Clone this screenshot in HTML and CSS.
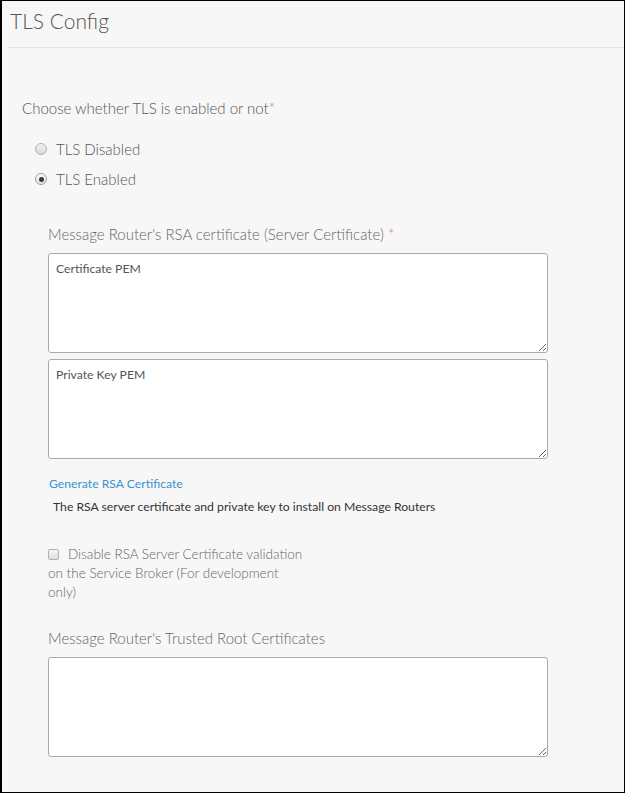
FILE: index.html
```html
<!DOCTYPE html>
<html>
<head>
<meta charset="utf-8">
<link rel="stylesheet" href="styles.css">
</head>
<body>
<div class="page">
  <div class="header">
    <h1 class="title">TLS Config</h1>
  </div>
  <div class="content">
    <div class="question">Choose whether TLS is enabled or not<span class="req">*</span></div>
    <div class="radios">
      <label class="radio"><span class="radio-dot"></span>TLS Disabled</label>
      <label class="radio"><span class="radio-dot checked"></span>TLS Enabled</label>
    </div>
    <div class="section">
      <div class="field-label">Message Router's RSA certificate (Server Certificate) <span class="req">*</span></div>
      <textarea class="ta" placeholder="Certificate PEM"></textarea>
      <textarea class="ta ta-second" placeholder="Private Key PEM"></textarea>
      <a class="link" href="#">Generate RSA Certificate</a>
      <div class="help">The RSA server certificate and private key to install on Message Routers</div>
      <div class="check-row">
        <span class="checkbox"></span>Disable RSA Server Certificate validation on the Service Broker (For development only)
      </div>
      <div class="field-label second-label">Message Router's Trusted Root Certificates</div>
      <textarea class="ta"></textarea>
    </div>
  </div>
</div>
</body>
</html>
```

FILE: styles.css
```css
html, body {
  margin: 0;
  padding: 0;
}
body {
  background: #000;
  font-family: Lato, "Open Sans", sans-serif;
}
.page {
  box-sizing: border-box;
  width: 625px;
  height: 793px;
  background: #f7f7f7;
  border: 1px solid #000;
  border-left-width: 2px;
  overflow: hidden;
}
.header {
  margin-left: 7px;
  border-bottom: 1px solid #e2e2e2;
  height: 46px;
}
.title {
  margin: 0;
  padding: 7px 0 0 1px;
  font-size: 21px;
  font-weight: 300;
  color: #555;
  line-height: 26px;
}
.content {
  padding: 50px 0 0 20px;
}
.question {
  font-size: 15px;
  font-weight: 300;
  color: #555;
  line-height: 20px;
}
.req {
  color: #e8756d;
}
.radios {
  display: flex;
  flex-direction: column;
  gap: 10px;
  margin: 21px 0 0 13px;
}
.radio {
  display: flex;
  align-items: center;
  gap: 9px;
  font-size: 15px;
  font-weight: 300;
  color: #555;
  line-height: 20px;
}
.radio-dot {
  box-sizing: border-box;
  width: 12px;
  height: 12px;
  border-radius: 50%;
  border: 1px solid #b0b0b0;
  background: linear-gradient(#f4f4f4, #d8d8d8);
  display: flex;
  align-items: center;
  justify-content: center;
}
.radio-dot.checked {
  background: linear-gradient(#fafafa, #e4e4e4);
  border-color: #a0a0a0;
}
.radio-dot.checked::after {
  content: "";
  width: 5px;
  height: 5px;
  border-radius: 50%;
  background: #3a3a3a;
}
.section {
  margin: 35px 0 0 26px;
  display: flex;
  flex-direction: column;
  align-items: flex-start;
}
.field-label {
  font-size: 15px;
  font-weight: 300;
  color: #666;
  line-height: 20px;
  margin-bottom: 9px;
}
.ta {
  box-sizing: border-box;
  width: 500px;
  height: 100px;
  border: 1px solid #aaa;
  border-radius: 3px;
  background: #fff;
  padding: 7px 7px;
  font-family: Lato, "Open Sans", sans-serif;
  font-size: 12.2px;
  color: #555;
  resize: vertical;
  display: block;
  margin: 0;
}
.ta::placeholder {
  color: #555;
  opacity: 1;
}
.ta-second {
  margin-top: 6px;
}
.link {
  margin: 16px 0 0 1px;
  font-size: 12.2px;
  color: #3a93cf;
  text-decoration: none;
  line-height: 18px;
}
.help {
  margin: 5px 0 0 5px;
  font-size: 12.2px;
  color: #333;
  line-height: 18px;
}
.check-row {
  margin-top: 29px;
  width: 262px;
  font-size: 13.5px;
  font-weight: 300;
  color: #666;
  line-height: 19px;
}
.checkbox {
  display: inline-block;
  box-sizing: border-box;
  width: 11px;
  height: 11px;
  border: 1px solid #b0b0b0;
  border-radius: 2px;
  background: linear-gradient(#f6f6f6, #dedede);
  margin-right: 9px;
  vertical-align: -1px;
}
.second-label {
  margin-top: 26px;
}
```
